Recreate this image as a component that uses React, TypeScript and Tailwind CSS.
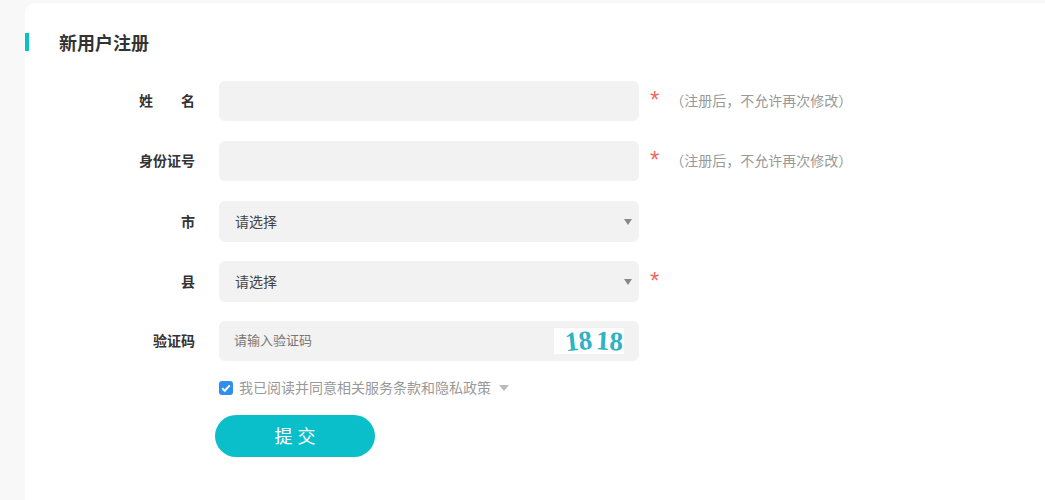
const font = "font-['Noto_Sans_CJK_SC','Liberation_Sans',sans-serif]";

function Caret() {
  return <span className="w-0 h-0 border-x-[4px] border-x-transparent border-t-[6px] border-t-[#888]" />;
}

function Star() {
  return <span className="ml-[11px] text-[24px] leading-[24px] h-[24px] -mt-[2px] text-[#f0695f] font-['Liberation_Sans',sans-serif]">*</span>;
}

function Hint() {
  return <span className="ml-[11px] -mt-[1px] text-[14px] text-[#999]">（注册后，不允许再次修改）</span>;
}

function Row({ label, children, className = "h-10" }: { label: React.ReactNode; children: React.ReactNode; className?: string }) {
  return (
    <div className={`flex items-center ${className}`}>
      <div className="w-[141px] -mt-[1px] flex justify-end text-[14px] font-bold text-[#333]">{label}</div>
      <div className="ml-[24px] flex items-center h-full">{children}</div>
    </div>
  );
}

function Field({ children }: { children?: React.ReactNode }) {
  return <div className="w-[420px] h-full rounded-[6px] bg-[#f2f2f2] flex items-center relative">{children}</div>;
}

function Select() {
  return (
    <Field>
      <span className="pl-[16px] -mt-[1px] text-[14px] text-[#444]">请选择</span>
      <span className="absolute right-[7px] top-[18px] flex"><Caret /></span>
    </Field>
  );
}

export default function App() {
  return (
    <div className={`h-[500px] w-[1045px] overflow-hidden bg-[#f8f8f8] pl-[25px] pt-[3px] ${font}`}>
      <div className="h-[497px] bg-white rounded-tl-[10px] pt-[30px]">
        <div className="h-[18px] border-l-[4px] border-[#0abfca] pl-[30px] flex items-center text-[18px] font-bold text-[#333]">
          新用户注册
        </div>
        <div className="mt-[30px] ml-[29px] flex flex-col gap-5">
          <Row label={<span className="flex justify-between w-[56px]"><span>姓</span><span>名</span></span>}>
            <Field /><Star /><Hint />
          </Row>
          <Row label="身份证号">
            <Field /><Star /><Hint />
          </Row>
          <Row label="市" className="h-[41px]">
            <Select />
          </Row>
          <Row label="县" className="h-[41px] -mt-[1px]">
            <Select /><Star />
          </Row>
          <Row label="验证码" className="h-10 -mt-[1px]">
            <Field>
              <span className="pl-[15px] -mt-[2px] text-[13px] text-[#777]">请输入验证码</span>
              <span className="absolute right-[15px] top-[7px] w-[70px] h-[26px] bg-white flex items-center justify-end gap-[4px] pr-[1px] text-[#2fb3c4] text-[27px] leading-none font-bold font-['Liberation_Serif',serif]">
                <span className="-rotate-6">18</span><span className="rotate-3">18</span>
              </span>
            </Field>
          </Row>
        </div>
        <div className="mt-[19px] ml-[194px] flex items-center h-[16px] text-[14px] text-[#999]">
          <span className="w-[14px] h-[14px] rounded-[3px] bg-[#2f8fee] flex items-center justify-center">
            <svg viewBox="0 0 14 14" className="w-[14px] h-[14px]" fill="none" stroke="#fff" strokeWidth="2">
              <path d="M3.2 7.2l2.6 2.6 5-5.4" />
            </svg>
          </span>
          <span className="ml-[6px] -mt-[1px]">我已阅读并同意相关服务条款和隐私政策</span>
          <span className="ml-[8px] w-0 h-0 border-x-[5px] border-x-transparent border-t-[6px] border-t-[#bbb]" />
        </div>
        <button className="mt-[19px] ml-[190px] block w-[160px] h-[42px] rounded-full bg-[#0abfca] text-white text-[18px] tracking-[5px] leading-none pb-[2px] pl-[5px]">
          提交
        </button>
      </div>
    </div>
  );
}
